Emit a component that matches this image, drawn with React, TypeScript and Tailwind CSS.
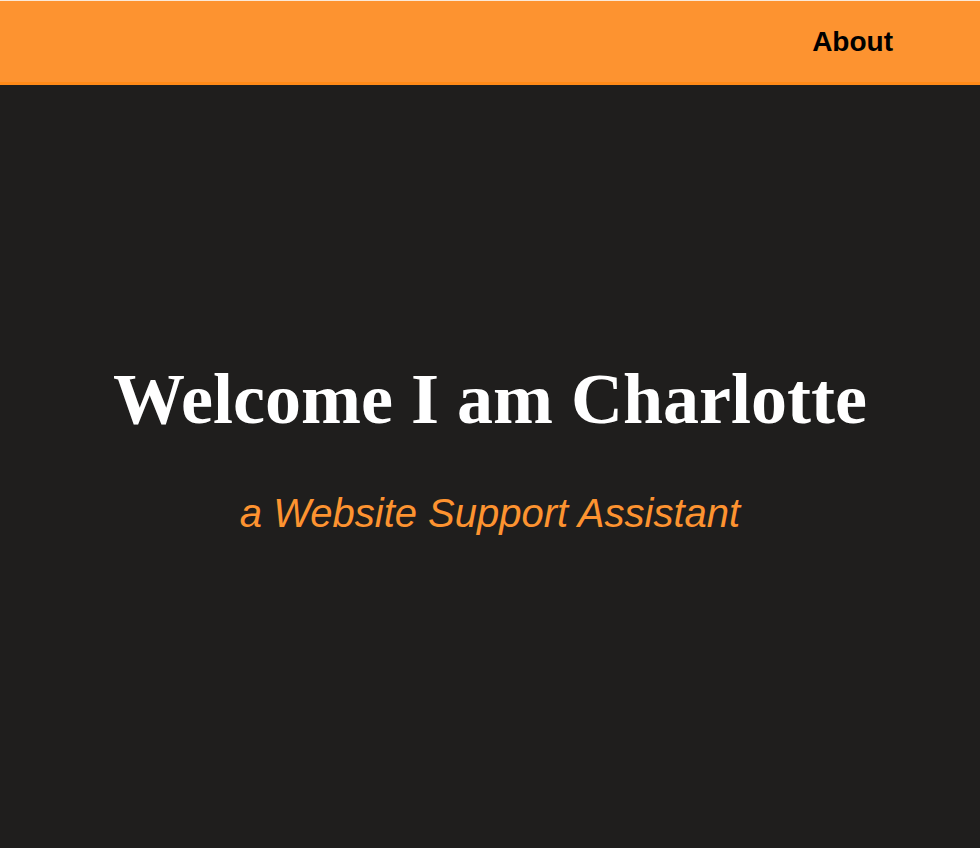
import React from 'react';

const App: React.FC = () => {
  return (
    <div className="min-h-screen flex flex-col bg-[#1f1e1d]">
      <header className="h-[85px] bg-[#fd9330] border-t border-t-[#fbe9d8] border-b-[3px] border-b-[#ff8a18] flex items-center justify-end pr-[87px]">
        <a href="#" className="text-[28px] font-bold text-black font-['Liberation_Sans',Arial,sans-serif]">
          About
        </a>
      </header>
      <main className="flex-1 flex flex-col items-center pt-[273px]">
        <h1 className="text-[72px] font-bold text-white leading-[1.15] font-['Liberation_Serif','Times_New_Roman',serif]">
          Welcome I am Charlotte
        </h1>
        <p className="mt-[42px] text-[40px] italic text-[#fd9330] font-['Liberation_Sans',Arial,sans-serif]">
          a Website Support Assistant
        </p>
      </main>
    </div>
  );
};

export default App;
